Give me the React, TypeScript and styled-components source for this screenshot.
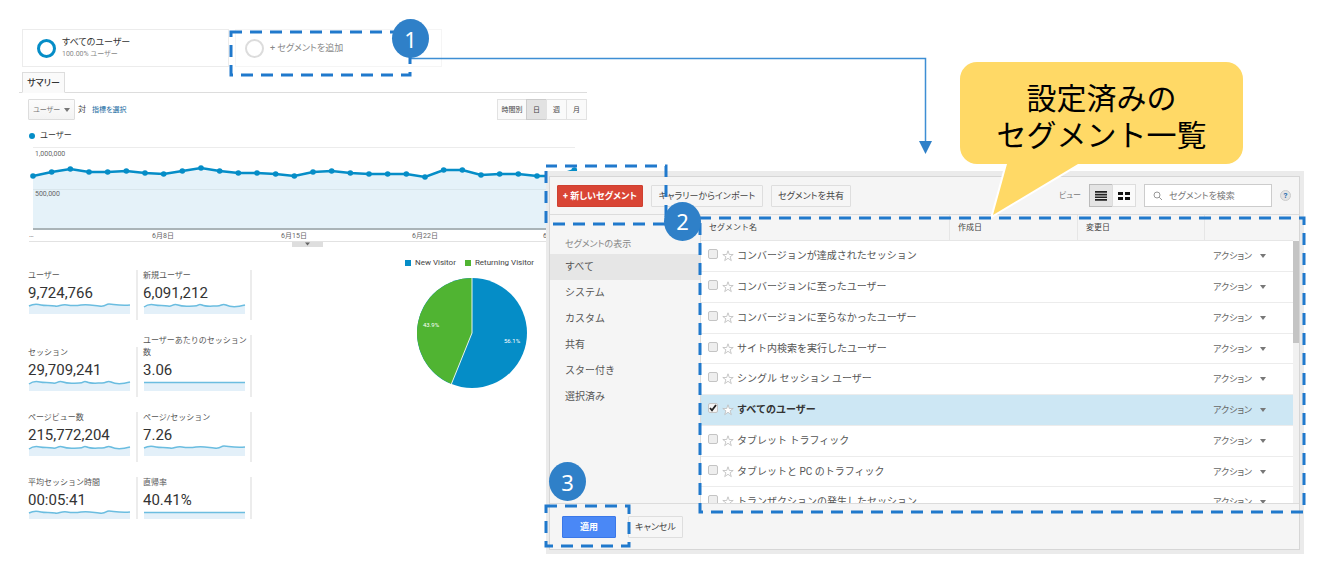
import React, { useState } from "react";
import styled, { createGlobalStyle, css } from "styled-components";

const BLUE = "#058dc7";
const MARK = "#2f80c8";

const GlobalStyle = createGlobalStyle`
  *, *::before, *::after { box-sizing: border-box; }
  body {
    margin: 0;
    background: #fff;
    color: #444;
    font: 9px/12px Roboto, "Noto Sans CJK JP", sans-serif;
    font-feature-settings: "palt";
  }
  button, input, select { font: inherit; font-feature-settings: inherit; color: inherit; margin: 0; }
`;

const Page = styled.main`
  position: relative;
  display: grid;
  padding: 29px 16px 14px 19px;
`;

/* ---------- annotations ---------- */

const OutlineBox = styled.span<{ $inset: string }>`
  position: absolute;
  inset: ${(p) => p.$inset};
  z-index: 2;
  pointer-events: none;
  svg { display: block; width: 100%; height: 100%; overflow: visible; }
`;

const Badge = styled.span<{ $top: number; $left: number }>`
  position: absolute;
  top: ${(p) => p.$top}px;
  left: ${(p) => p.$left}px;
  z-index: 3;
  display: flex;
  align-items: center;
  justify-content: center;
  width: 37px;
  height: 39px;
  border-radius: 50%;
  background: ${MARK};
  color: #fff;
  font: 22px/38px "Noto Sans", sans-serif;
`;

const Anchor = styled.span`
  position: relative;
  display: flex;
`;

const ArrowSvg = styled.svg`
  position: absolute;
  top: 57px;
  left: 410px;
  z-index: 1;
`;

const Speech = styled.div`
  position: absolute;
  top: 62px;
  right: 77px;
  z-index: 1;
  width: 283px;
  height: 102px;
  padding-top: 16px;
  color: #000;
  font: 400 30px/37px "Noto Sans CJK JP", sans-serif;
  font-feature-settings: normal;
  text-align: center;
  svg { position: absolute; top: 0; left: 0; overflow: visible; }
  p { position: relative; margin: 0; }
`;

const Outline = ({ inset }: { inset: string }) => (
  <OutlineBox $inset={inset}>
    <svg>
      <rect width="100%" height="100%" fill="none" stroke="#2079cc" strokeWidth="3" strokeDasharray="12 8" strokeDashoffset="1" />
    </svg>
  </OutlineBox>
);

/* ---------- report ---------- */

const Report = styled.section`
  grid-area: 1 / 1;
  justify-self: start;
  width: 571px;
`;

const Segments = styled.div`
  display: flex;
  gap: 6px;
  margin-left: 3px;
`;

const SegmentCard = styled.div<{ $muted?: boolean }>`
  position: relative;
  display: flex;
  align-items: center;
  gap: 6px;
  width: 207px;
  height: 38px;
  padding-left: ${(p) => (p.$muted ? 9 : 14)}px;
  border: 1px solid ${(p) => (p.$muted ? "#f5f5f5" : "#ececec")};
  color: ${(p) => (p.$muted ? "#888" : "#333")};
  small { display: block; color: #888; font-size: 7px; line-height: 12px; }
  button { padding: 0; border: 0; background: none; }
`;

const Ring = styled.span<{ $color: string; $width: number }>`
  width: 19px;
  height: 19px;
  border: ${(p) => p.$width}px solid ${(p) => p.$color};
  border-radius: 50%;
`;

const TabBar = styled.div`
  display: flex;
  height: 26px;
  padding: 5px 0 0 3px;
  border-bottom: 1px solid #ddd;
  width: 568px;
`;

const Tab = styled.button`
  height: 21px;
  width: 43px;
  padding: 0;
  border: 1px solid #ddd;
  border-bottom-color: #fafafa;
  background: #fafafa;
  font-weight: 500;
  color: #333;
`;

const Controls = styled.div`
  display: flex;
  align-items: center;
  width: 568px;
  margin-top: 6px;
  padding-left: 9px;
  gap: 3px;
  font-size: 8px;
`;

const MetricSelect = styled.label`
  position: relative;
  display: flex;
  align-items: center;
  select {
    appearance: none;
    width: 47px;
    height: 21px;
    padding: 0 12px 0 4px;
    border: 1px solid #ddd;
    border-radius: 1px;
    background: linear-gradient(#fcfcfc, #f3f3f3);
    color: #777;
    font-size: 7px;
  }
  svg { position: absolute; right: 5px; }
`;

const MetricLink = styled.a`
  margin-left: 3px;
  color: #1668a0;
  font-size: 7px;
  text-decoration: none;
`;

const Ranges = styled.div`
  display: flex;
  margin-left: auto;
`;

const RangeButton = styled.button<{ $on?: boolean; $wide?: boolean }>`
  width: ${(p) => (p.$wide ? 30 : 21)}px;
  height: 21px;
  padding: 0;
  border: 1px solid ${(p) => (p.$on ? "#ccc" : "#e2e2e2")};
  background: ${(p) => (p.$on ? "#e2e2e2" : "#fafafa")};
  font-size: 7px;
  & + & { margin-left: -1px; }
`;

const ChartLegend = styled.div`
  display: flex;
  align-items: center;
  gap: 5px;
  margin: 10px 0 5px 10px;
  color: #333;
  font-size: 8px;
  font-feature-settings: normal;
  &::before { content: ""; width: 6px; height: 6px; border-radius: 50%; background: ${BLUE}; }
`;

const ChartSvg = styled.svg`
  display: block;
  width: 100%;
  font-size: 7px;
  fill: #666;
`;

const Lower = styled.div`
  display: flex;
  padding-left: 9px;
`;

const Metrics = styled.dl`
  display: grid;
  grid-template-columns: 110px 114px;
  row-gap: 15px;
  margin: 22px 0 0;
`;

const Metric = styled.div<{ $cut?: boolean }>`
  align-self: end;
  padding: 0 1px ${(p) => (p.$cut ? 0 : 6)}px 0;
  border-right: 2px solid #ececec;
  &:nth-child(even) { padding-left: 5px; }
  dt { color: #555; font-size: 8px; font-feature-settings: normal; }
  dd { margin: 0; color: #333; font-size: 15px; line-height: 22px; }
  svg { display: block; margin-left: 1px; overflow: visible; }
`;

const PiePanel = styled.figure`
  margin: 9px 0 0 153px;
`;

const PieLegend = styled.figcaption`
  display: flex;
  gap: 9px;
  font-size: 8px;
  line-height: 12px;
`;

const LegendKey = styled.span<{ $color: string }>`
  display: flex;
  align-items: center;
  gap: 4px;
  &::before { content: ""; width: 6px; height: 6px; background: ${(p) => p.$color}; }
`;

const PieSvg = styled.svg`
  display: block;
  margin: 9px 0 0 12px;
  font-size: 6px;
  fill: #fff;
`;

/* ---------- segment dialog ---------- */

const Dialog = styled.section`
  grid-area: 1 / 1;
  align-self: start;
  margin: 142px 0 0 527px;
  border: solid #ebebeb;
  border-width: 5px 4px 4px 3px;
  background: #f5f5f5;
`;

const DialogInner = styled.div`
  border: 1px solid #d6d6d6;
`;

const Toolbar = styled.header`
  display: flex;
  align-items: center;
  gap: 8px;
  height: 38px;
  padding: 0 8px 0 7px;
  border-bottom: 1px solid #dcdcdc;
`;

const Button = styled.button<{ $tone?: "red" | "blue"; $width: number }>`
  width: ${(p) => p.$width}px;
  height: 22px;
  padding: 0;
  border: 1px solid #dedede;
  border-radius: 1px;
  background: #f6f6f6;
  white-space: nowrap;
  ${(p) =>
    p.$tone &&
    css`
      border-color: ${p.$tone === "red" ? "#cf4030" : "#3b78e8"};
      background: ${p.$tone === "red" ? "#d94535" : "#4a88f6"};
      color: #fff;
      font-weight: 700;
    `}
`;

const ViewSwitch = styled.div`
  display: flex;
  align-items: center;
  margin-left: auto;
  color: #777;
  font-size: 8px;
  span { margin-right: 8px; }
`;

const ViewButton = styled.button<{ $on?: boolean }>`
  display: flex;
  align-items: center;
  justify-content: center;
  width: 24px;
  height: 23px;
  padding: 0;
  border: 1px solid ${(p) => (p.$on ? "#bbb" : "#ddd")};
  background: ${(p) => (p.$on ? "#e4e4e4" : "#fafafa")};
  & + & { margin-left: -1px; }
`;

const Search = styled.label`
  display: flex;
  align-items: center;
  gap: 6px;
  width: 128px;
  height: 23px;
  padding: 0 8px;
  border: 1px solid #ccc;
  background: #fff;
  input { flex: 1; min-width: 0; padding: 0; border: 0; outline: 0; background: none; }
  input::placeholder { color: #777; opacity: 1; }
`;

const Help = styled.button`
  width: 11px;
  height: 11px;
  padding: 0;
  border: 1px solid #ccc;
  border-radius: 50%;
  background: #e4e4e4;
  color: #2a6cae;
  font-size: 8px;
  line-height: 8px;
  font-weight: 700;
`;

const Body = styled.div`
  display: flex;
  height: 288px;
`;

const Side = styled.nav`
  width: 151px;
  padding-top: 19px;
  border-right: 1px solid #ddd;
  h2 { margin: 0; padding-left: 15px; font-size: 9px; line-height: 20px; font-weight: 400; color: #888; }
`;

const SideItem = styled.a<{ $on?: boolean }>`
  display: block;
  padding-left: 15px;
  background: ${(p) => (p.$on ? "#e6e6e6" : "none")};
  color: #555;
  font-size: 10px;
  font-feature-settings: normal;
  line-height: 26px;
  text-decoration: none;
`;

const TableArea = styled.div`
  position: relative;
  flex: 1;
  min-width: 0;
`;

const Scroller = styled.div`
  display: flex;
  height: 100%;
  overflow: hidden;
`;

const ScrollTrack = styled.div`
  flex: none;
  width: 6px;
  margin-top: 26px;
  background: #f1f1f1;
  &::before { content: ""; display: block; height: 102px; background: #c4c4c4; }
`;

const Table = styled.table`
  flex: 1;
  table-layout: fixed;
  border-collapse: separate;
  border-spacing: 0;
  align-self: flex-start;
  width: 100%;
  th {
    height: 26px;
    padding: 0 8px;
    border-right: 1px solid #e6e6e6;
    border-bottom: 1px solid #e6e6e6;
    font-size: 8px;
    font-feature-settings: normal;
    font-weight: 400;
    text-align: left;
  }
  th:last-child { border-right: 0; }
`;

const Col = styled.col<{ $width?: number }>`
  width: ${(p) => (p.$width ? `${p.$width}px` : "auto")};
`;

const Row = styled.tr<{ $on: boolean }>`
  background: ${(p) => (p.$on ? "#cde7f4" : "#fff")};
  font-weight: ${(p) => (p.$on ? 700 : 400)};
  color: ${(p) => (p.$on ? "#333" : "#555")};
  td { height: 31px; padding: 0 7px; border-bottom: 1px solid #ececec; }
  &:nth-child(4n) td { height: 30px; }
`;

const NameCell = styled.div`
  display: flex;
  align-items: center;
  font-size: 10px;
  font-feature-settings: normal;
  line-height: 16px;
  white-space: nowrap;
  label { margin-left: 3px; }
`;

const Check = styled.input`
  appearance: none;
  width: 10px;
  height: 10px;
  margin-bottom: 4px;
  border: 1px solid #c4c4c4;
  border-radius: 2px;
  background: #eee;
  &:checked {
    background: #f4f4f4 url("data:image/svg+xml,%3Csvg xmlns='http://www.w3.org/2000/svg' viewBox='0 0 8 8'%3E%3Cpath d='M1 4l2 2.4L7 1' fill='none' stroke='%23222' stroke-width='1.8'/%3E%3C/svg%3E");
  }
`;

const StarButton = styled.button`
  display: flex;
  margin-left: 4px;
  padding: 0;
  border: 0;
  background: none;
`;

const ActionButton = styled.button`
  display: flex;
  align-items: center;
  gap: 8px;
  padding: 0 0 0 1px;
  border: 0;
  background: none;
  color: #666;
  font-size: 9px;
  font-weight: 400;
`;

const Footer = styled.footer`
  display: flex;
  gap: 12px;
  height: 46px;
  padding: 12px;
  border-top: 1px solid #dcdcdc;
`;

/* ---------- data ---------- */

const DAILY = [
  176, 172, 169, 172, 172, 171, 173, 174, 171, 168, 171, 173, 173, 174, 176,
  172, 171, 173, 174, 174, 174, 177, 170, 170, 175, 174, 174, 176, 176, 170,
];

const FLAT = "M0 1.5H101";
const SMOOTH = "M0 2C4 0 8 0 12 1S22 1 26 2 32 0 38 1 46 2 52 1 62 1 70 2 76 0 80 0 90 2 101 1";
const WAVY = "M0 3C4 0 7 0 11 1S20 1 24 2 29 -1 34 1 44 2 50 2 54 -1 58 1 68 2 73 2 78 -1 82 1 94 3 101 1";

const METRICS: { label: string; value: string; line: string; cut?: boolean }[] = [
  { label: "ユーザー", value: "9,724,766", line: SMOOTH },
  { label: "新規ユーザー", value: "6,091,212", line: WAVY },
  { label: "セッション", value: "29,709,241", line: WAVY },
  { label: "ユーザーあたりのセッション数", value: "3.06", line: FLAT },
  { label: "ページビュー数", value: "215,772,204", line: WAVY },
  { label: "ページ/セッション", value: "7.26", line: SMOOTH },
  { label: "平均セッション時間", value: "00:05:41", line: SMOOTH, cut: true },
  { label: "直帰率", value: "40.41%", line: FLAT, cut: true },
];

const SIDE_ITEMS = ["すべて", "システム", "カスタム", "共有", "スター付き", "選択済み"];

const SEGMENTS = [
  "コンバージョンが達成されたセッション",
  "コンバージョンに至ったユーザー",
  "コンバージョンに至らなかったユーザー",
  "サイト内検索を実行したユーザー",
  "シングル セッション ユーザー",
  "すべてのユーザー",
  "タブレット トラフィック",
  "タブレットと PC のトラフィック",
  "トランザクションの発生したセッション",
];

const Caret = () => (
  <svg width="6" height="4" viewBox="0 0 6 4" fill="#777"><path d="M0 0h6L3 4z" /></svg>
);

const xAt = (i: number) => 14 + (i * 56) / 3;

const LineChart = () => {
  const points = DAILY.map((y, i) => `${xAt(i)},${y - 147}`).join(" ");
  return (
    <ChartSvg viewBox="0 0 571 101">
      <path d="M14 .5H556" stroke="#ececec" />
      <polygon points={`14,82 ${points} ${xAt(29)},82`} fill="#e5f2f9" />
      <path d="M14 42.500H556" stroke="#d9e6ec" />
      <path d="M14 82H556" stroke="#aab4b8" strokeWidth="2" />
      <polyline points={points} fill="none" stroke={BLUE} strokeWidth="2.5" />
      {DAILY.map((y, i) => <circle key={i} cx={xAt(i)} cy={y - 147} r="2.8" fill={BLUE} />)}
      <text x="16" y="9">1,000,000</text>
      <text x="16" y="49">500,000</text>
      <text x="10" y="90">…</text>
      <g textAnchor="middle">
        <text x="144" y="91">6月8日</text>
        <text x="275" y="91">6月15日</text>
        <text x="406" y="91">6月22日</text>
        <text x="537" y="91">6月29日</text>
      </g>
      <path d="M10 94.500H571" stroke="#e2e2e2" />
      <path d="M273 95h31v5h-31z" fill="#dedede" />
      <path d="M286 95.500h5l-2.500 3z" fill="#666" />
    </ChartSvg>
  );
};

export default function App() {
  const [checked, setChecked] = useState<Record<string, boolean>>({ "すべてのユーザー": true });

  return (
    <Page>
      <GlobalStyle />

      <Report>
        <Segments>
          <SegmentCard>
            <Ring $color={BLUE} $width={3} />
            <div>すべてのユーザー<small>100.00% ユーザー</small></div>
          </SegmentCard>
          <SegmentCard $muted>
            <Ring $color="#dcdcdc" $width={2} />
            <button type="button">+ セグメントを追加</button>
            <Outline inset="2px 31px -9px -5px" />
            <Badge $top={-11} $left={156}>1</Badge>
          </SegmentCard>
        </Segments>

        <TabBar><Tab type="button">サマリー</Tab></TabBar>

        <Controls>
          <MetricSelect>
            <select aria-label="指標"><option>ユーザー</option></select>
            <Caret />
          </MetricSelect>
          <span>対</span>
          <MetricLink href="#metric">指標を選択</MetricLink>
          <Ranges>
            <RangeButton type="button" $wide>時間別</RangeButton>
            <RangeButton type="button" $on>日</RangeButton>
            <RangeButton type="button">週</RangeButton>
            <RangeButton type="button">月</RangeButton>
          </Ranges>
        </Controls>

        <ChartLegend>ユーザー</ChartLegend>
        <LineChart />

        <Lower>
          <Metrics>
            {METRICS.map((m) => (
              <Metric key={m.label} $cut={m.cut}>
                <dt>{m.label}</dt>
                <dd>{m.value}</dd>
                <svg width="101" height={m.cut ? 8 : 10}>
                  <path d={`${m.line}V${m.cut ? 8 : 10}H0Z`} fill="#e3f0f9" />
                  <path d={m.line} fill="none" stroke="#6bbde0" strokeWidth="1.5" />
                </svg>
              </Metric>
            ))}
          </Metrics>
          <PiePanel>
            <PieLegend>
              <LegendKey $color={BLUE}>New Visitor</LegendKey>
              <LegendKey $color="#50b432">Returning Visitor</LegendKey>
            </PieLegend>
            <PieSvg width="110" height="110" viewBox="0 0 110 110">
              <circle cx="55" cy="55" r="55" fill={BLUE} />
              <path d="M55 55V0A55 55 0 0 0 34.400 106Z" fill="#50b432" />
              <path d="M55 0V55L34.400 106" fill="none" stroke="#e8f4ee" />
              <g textAnchor="middle">
                <text x="14" y="49">43.9%</text>
                <text x="95" y="65">56.1%</text>
              </g>
            </PieSvg>
          </PiePanel>
        </Lower>
      </Report>

      <Dialog>
        <DialogInner>
          <Toolbar>
            <Anchor>
              <Button type="button" $tone="red" $width={86}>+ 新しいセグメント</Button>
              <Outline inset="-19px -23px -17px -11px" />
              <Badge $top={17} $left={107}>2</Badge>
            </Anchor>
            <Button type="button" $width={112}>ギャラリーからインポート</Button>
            <Button type="button" $width={80}>セグメントを共有</Button>
            <ViewSwitch>
              <span>ビュー</span>
              <ViewButton type="button" $on aria-label="リスト">
                <svg width="12" height="10" fill="#222"><path d="M0 0h12v1.700H0zM0 2.700h12v1.700H0zM0 5.400h12v1.700H0zM0 8.100h12v1.700H0z" /></svg>
              </ViewButton>
              <ViewButton type="button" aria-label="グリッド">
                <svg width="12" height="10" fill="#111"><path d="M0 1h5v3H0zM7 1h5v3H7zM0 6h5v3H0zM7 6h5v3H7z" /></svg>
              </ViewButton>
            </ViewSwitch>
            <Search>
              <svg width="10" height="10" fill="none" stroke="#999"><circle cx="4" cy="4" r="3" /><path d="M6.200 6.200L9 9" /></svg>
              <input type="search" aria-label="セグメントを検索" placeholder="セグメントを検索" />
            </Search>
            <Help type="button">?</Help>
          </Toolbar>

          <Body>
            <Side>
              <h2>セグメントの表示</h2>
              {SIDE_ITEMS.map((s, i) => <SideItem key={s} href={`#view-${i}`} $on={i === 0}>{s}</SideItem>)}
            </Side>
            <TableArea>
              <Scroller>
                <Table>
                  <colgroup><Col /><Col $width={128} /><Col $width={127} /><Col $width={88} /></colgroup>
                  <thead>
                    <tr><th>セグメント名</th><th>作成日</th><th>変更日</th><th aria-label="アクション" /></tr>
                  </thead>
                  <tbody>
                    {SEGMENTS.map((name, i) => (
                      <Row key={name} $on={!!checked[name]}>
                        <td colSpan={3}>
                          <NameCell>
                            <Check
                              id={`segment-${i}`}
                              type="checkbox"
                              checked={!!checked[name]}
                              onChange={(e) => setChecked({ ...checked, [name]: e.target.checked })}
                            />
                            <StarButton type="button" aria-label="スター">
                              <svg width="12" height="12" viewBox="0 0 12 12" fill="#fff" stroke="#bbb" strokeWidth=".8">
                                <path d="M6 .8l1.300 3.700h3.900L8.100 6.800l1.200 3.800L6 8.300l-3.300 2.300 1.200-3.800L.8 4.500h3.900z" />
                              </svg>
                            </StarButton>
                            <label htmlFor={`segment-${i}`}>{name}</label>
                          </NameCell>
                        </td>
                        <td><ActionButton type="button">アクション<Caret /></ActionButton></td>
                      </Row>
                    ))}
                  </tbody>
                </Table>
                <ScrollTrack />
              </Scroller>
              <Outline inset="3px -5px -9px -1px" />
            </TableArea>
          </Body>

          <Footer>
            <Anchor>
              <Button type="button" $tone="blue" $width={54}>適用</Button>
              <Outline inset="-10px -13px -9px -16px" />
              <Badge $top={-54} $left={-13}>3</Badge>
            </Anchor>
            <Button type="button" $width={55}>キャンセル</Button>
          </Footer>
        </DialogInner>
      </Dialog>

      <ArrowSvg width="522" height="98">
        <path d="M0 1.500H515.500V86" fill="none" stroke="#3d8ed4" strokeWidth="1.500" />
        <path d="M509 84h13l-6.500 13z" fill={MARK} />
      </ArrowSvg>

      <Speech>
        <svg width="283" height="153">
          <path
            d="M17 0H266A17 17 0 0 1 283 17V85A17 17 0 0 1 266 102H118L33 153 47 102H17A17 17 0 0 1 0 85V17A17 17 0 0 1 17 0Z"
            fill="#ffd966" stroke="#fff" strokeWidth="4" paintOrder="stroke"
          />
        </svg>
        <p>設定済みの<br />セグメント一覧</p>
      </Speech>
    </Page>
  );
}
